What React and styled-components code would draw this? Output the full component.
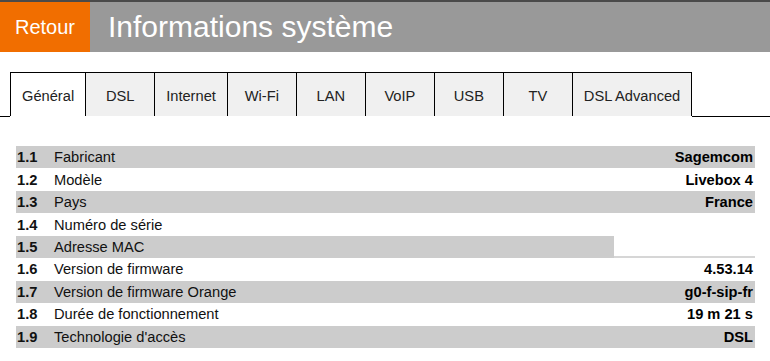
import React from "react";
import styled, { createGlobalStyle } from "styled-components";

const GlobalStyle = createGlobalStyle`
  body {
    margin: 0;
    background: #fff;
    font-family: "Liberation Sans", Arial, sans-serif;
  }
`;

const Page = styled.div`
  width: 770px;
`;

const Header = styled.header`
  display: flex;
  height: 50px;
  border-top: 2px solid #4a4a4a;
  background: #999999;
`;

const BackButton = styled.div`
  width: 90px;
  display: flex;
  align-items: center;
  justify-content: center;
  background: #f16e00;
  color: #fff;
  font-size: 20px;
`;

const Title = styled.h1`
  margin: 0;
  padding-left: 18px;
  display: flex;
  align-items: center;
  color: #fff;
  font-size: 30px;
  font-weight: normal;
`;

const TabBar = styled.nav`
  display: flex;
  margin-top: 20px;
`;

const Filler = styled.div`
  height: 44px;
  border-bottom: 1px solid #000;
  width: ${(p) => (p.$grow ? "auto" : "10px")};
  flex: ${(p) => (p.$grow ? 1 : "none")};
`;

const Tab = styled.div`
  box-sizing: border-box;
  height: 44px;
  min-width: 69px;
  padding: 2px 11px 0;
  display: flex;
  align-items: center;
  justify-content: center;
  border-top: 1px solid #000;
  border-left: 1px solid #000;
  border-right: ${(p) => (p.$last ? "1px solid #000" : "none")};
  background: ${(p) => (p.$active ? "#fff" : "#f0f0f0")};
  color: #222;
  font-size: 14.67px;
  white-space: nowrap;
`;

const Table = styled.div`
  margin: 29px 0 0 16px;
  width: 739px;
`;

const Row = styled.div`
  display: grid;
  grid-template-columns: 38px 1fr 141px;
  height: 22.45px;
  align-items: center;
  background: ${(p) => (p.$shade ? "#cccccc" : "#fff")};
  font-size: 14.67px;
  color: #111;
`;

const Num = styled.span`
  font-weight: bold;
  padding-left: 1px;
`;

const Label = styled.span`
  white-space: nowrap;
`;

const Value = styled.span`
  align-self: stretch;
  display: flex;
  align-items: center;
  justify-content: flex-end;
  padding-right: 2px;
  font-weight: bold;
  color: #000;
  ${(p) =>
    p.$masked &&
    `
    background: #fff;
    box-shadow: inset 0 -2px 0 ${p.$shade ? "#d6d6d6" : "#fff"};
  `}
`;

const tabs = ["Général", "DSL", "Internet", "Wi-Fi", "LAN", "VoIP", "USB", "TV", "DSL Advanced"];

const rows = [
  { n: "1.1", label: "Fabricant", value: "Sagemcom" },
  { n: "1.2", label: "Modèle", value: "Livebox 4" },
  { n: "1.3", label: "Pays", value: "France" },
  { n: "1.4", label: "Numéro de série", value: "", masked: true },
  { n: "1.5", label: "Adresse MAC", value: "", masked: true },
  { n: "1.6", label: "Version de firmware", value: "4.53.14" },
  { n: "1.7", label: "Version de firmware Orange", value: "g0-f-sip-fr" },
  { n: "1.8", label: "Durée de fonctionnement", value: "19 m 21 s" },
  { n: "1.9", label: "Technologie d'accès", value: "DSL" },
];

function App() {
  return (
    <Page>
      <GlobalStyle />
      <Header>
        <BackButton>Retour</BackButton>
        <Title>Informations système</Title>
      </Header>
      <TabBar>
        <Filler />
        {tabs.map((t, i) => (
          <Tab key={t} $active={i === 0} $last={i === tabs.length - 1}>
            {t}
          </Tab>
        ))}
        <Filler $grow />
      </TabBar>
      <Table>
        {rows.map((r, i) => (
          <Row key={r.n} $shade={i % 2 === 0}>
            <Num>{r.n}</Num>
            <Label>{r.label}</Label>
            <Value $masked={r.masked} $shade={i % 2 === 0}>
              {r.value}
            </Value>
          </Row>
        ))}
      </Table>
    </Page>
  );
}

export default App;
